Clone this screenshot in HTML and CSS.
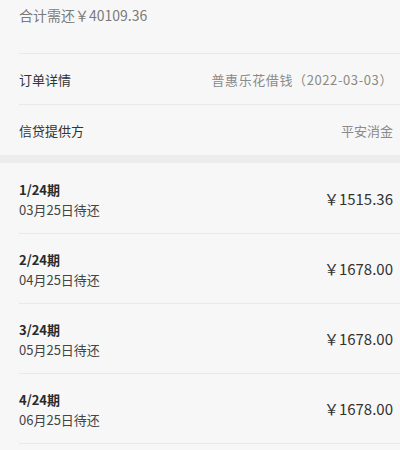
FILE: index.html
```html
<!DOCTYPE html>
<html lang="zh-CN">
<head>
    <meta charset="UTF-8">
    <meta name="viewport" content="width=device-width, initial-scale=1.0">
    <title>还款计划</title>
    <link rel="stylesheet" href="styles.css">
</head>
<body>
    <div class="page">
        <div class="summary">
            <div class="total">合计需还￥40109.36</div>
        </div>
        <div class="info">
            <div class="info-row">
                <span class="label">订单详情</span>
                <span class="value order">普惠乐花借钱（2022-03-03）</span>
            </div>
            <div class="info-row">
                <span class="label">信贷提供方</span>
                <span class="value">平安消金</span>
            </div>
        </div>
        <div class="gap"></div>
        <div class="plan">
            <div class="plan-row">
                <div class="plan-left">
                    <div class="term">1/24期</div>
                    <div class="due">03月25日待还</div>
                </div>
                <div class="amount">￥1515.36</div>
            </div>
            <div class="plan-row">
                <div class="plan-left">
                    <div class="term">2/24期</div>
                    <div class="due">04月25日待还</div>
                </div>
                <div class="amount">￥1678.00</div>
            </div>
            <div class="plan-row">
                <div class="plan-left">
                    <div class="term">3/24期</div>
                    <div class="due">05月25日待还</div>
                </div>
                <div class="amount">￥1678.00</div>
            </div>
            <div class="plan-row">
                <div class="plan-left">
                    <div class="term">4/24期</div>
                    <div class="due">06月25日待还</div>
                </div>
                <div class="amount">￥1678.00</div>
            </div>
        </div>
    </div>
</body>
</html>
```

FILE: styles.css
```css
body {
    margin: 0;
    background-color: #f7f7f7;
    font-family: "Noto Sans CJK SC", "Noto Sans", sans-serif;
    color: #333;
}

.page {
    width: 400px;
    overflow: hidden;
}

.summary {
    padding: 5px 7px 0 19px;
    height: 48px;
}

.total {
    font-size: 14px;
    line-height: 20px;
    color: #7a7a7a;
}

.info {
    padding-left: 19px;
}

.info-row {
    display: flex;
    justify-content: space-between;
    align-items: center;
    height: 50px;
    padding-right: 7px;
    border-top: 1px solid #e9e9e9;
    font-size: 13px;
}

.label {
    color: #333;
}

.value {
    color: #8a8a8a;
}

.order {
    letter-spacing: 0.6px;
}

.gap {
    height: 8px;
    background-color: #ececec;
}

.plan {
    padding-left: 19px;
    padding-top: 1px;
}

.plan-row {
    display: flex;
    justify-content: space-between;
    align-items: center;
    height: 69px;
    padding-right: 7px;
    border-bottom: 1px solid #e9e9e9;
}

.plan-left {
    padding-top: 2px;
}

.term {
    font-size: 13px;
    font-weight: bold;
    line-height: 20px;
    color: #2a2a2a;
}

.due {
    font-size: 13px;
    line-height: 20px;
    color: #444;
}

.amount {
    font-size: 15px;
    color: #333;
}
```
